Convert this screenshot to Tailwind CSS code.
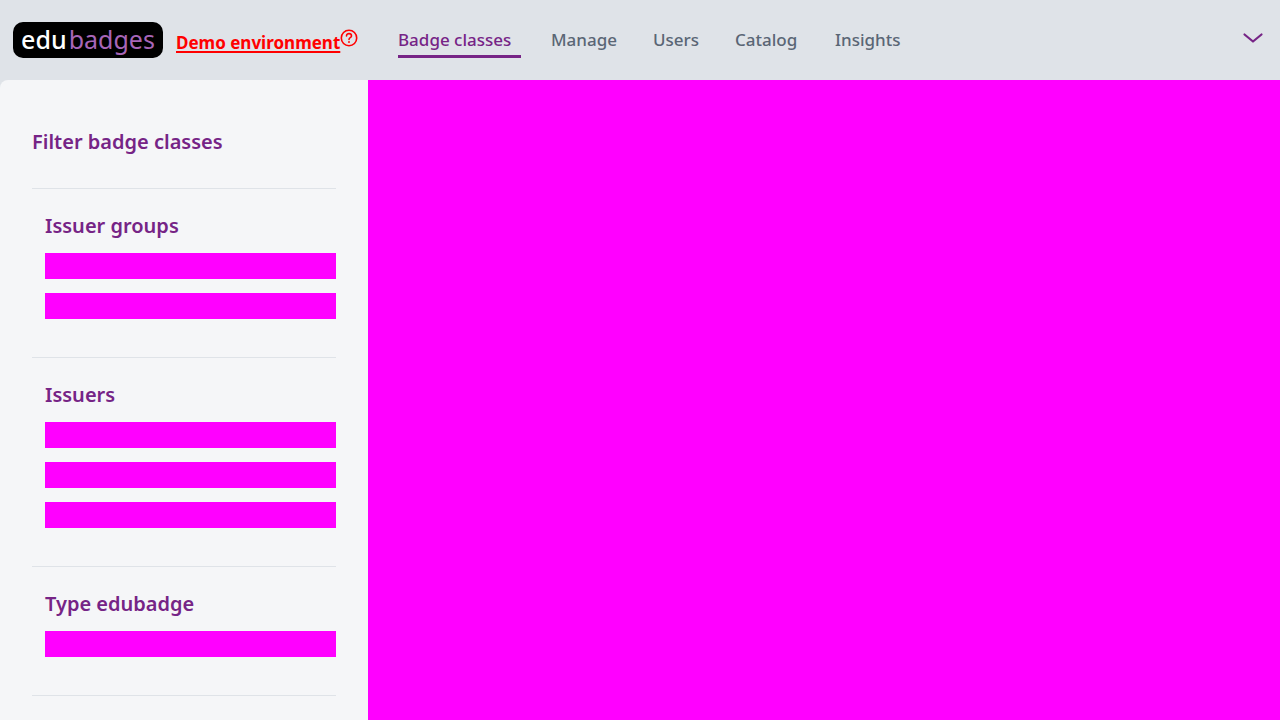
<!DOCTYPE html>
<html lang="en">
<head>
<meta charset="utf-8">
<meta name="viewport" content="width=device-width, initial-scale=1">
<title>edubadges</title>
<script src="https://cdn.jsdelivr.net/npm/@tailwindcss/browser@4"></script>
</head>
<body class="flex h-screen flex-col overflow-hidden bg-[#dfe3e8] font-['Noto_Sans','Open_Sans',sans-serif] text-[#762486]">
<header class="flex h-20 shrink-0 items-center pl-[13px] pr-4">
  <a href="#" class="flex h-9 w-[150px] items-center justify-center gap-0.5 rounded-[10px] bg-black pb-0.5 text-[25px] leading-[34px]"><span class="font-medium text-white">edu</span><span class="text-[#a866b8]">badges</span></a>
  <a href="#" class="ml-[13px] flex w-[185px] text-[#ff0000]"><span class="mt-1.5 text-[17px] leading-7 font-bold whitespace-nowrap underline decoration-2 underline-offset-2">Demo environment</span>
    <svg class="mt-1.5 size-[18px] shrink-0" viewBox="0 0 18 18" fill="none" stroke="currentColor" stroke-width="1.6" stroke-linecap="round" aria-label="Help"><circle cx="9" cy="9" r="7.7"/><path d="M6.500 7c0-3.200 5-3 5-.1C11.500 8.700 9 8.600 9 10.400"/><path d="M9 13v.1" stroke-width="1.900"/></svg>
  </a>
  <nav class="ml-[37px] flex gap-[30px] text-[17px] leading-6 font-medium text-[#5a6675]">
    <a href="#" aria-current="page" class="min-w-[123px] border-b-3 border-[#762486] pt-1.5 pb-[3px] text-[#762486]">Badge classes</a>
    <a href="#" class="min-w-[72px] pt-1.5">Manage</a>
    <a href="#" class="min-w-[52px] pt-1.5">Users</a>
    <a href="#" class="min-w-[70px] pt-1.5">Catalog</a>
    <a href="#" class="pt-1.5">Insights</a>
  </nav>
  <button type="button" aria-label="Open user menu" class="ml-auto pb-1">
    <svg class="h-3 w-[22px]" viewBox="0 0 22 12" fill="none" stroke="currentColor" stroke-width="2.200" stroke-linecap="round" stroke-linejoin="round"><path d="M2.500 2.500 11 9.500l8.500-7"/></svg>
  </button>
</header>
<div class="flex min-h-0 flex-1">
  <aside class="w-[368px] shrink-0 overflow-hidden rounded-tl-lg bg-[#f5f6f8] px-8 pt-12">
    <h2 class="pb-8 text-xl leading-7 font-semibold">Filter badge classes</h2>
    <section class="border-t border-[#dfe3e8] pt-[23px] pb-[38px] pl-[13px]">
      <h3 class="mb-[13px] text-xl leading-7 font-semibold">Issuer groups</h3>
      <div class="flex flex-col gap-[14px]"><div class="h-[26px] bg-[#ff00ff]"></div><div class="h-[26px] bg-[#ff00ff]"></div></div>
    </section>
    <section class="border-t border-[#dfe3e8] pt-[23px] pb-[38px] pl-[13px]">
      <h3 class="mb-[13px] text-xl leading-7 font-semibold">Issuers</h3>
      <div class="flex flex-col gap-[14px]"><div class="h-[26px] bg-[#ff00ff]"></div><div class="h-[26px] bg-[#ff00ff]"></div><div class="h-[26px] bg-[#ff00ff]"></div></div>
    </section>
    <section class="border-y border-[#dfe3e8] pt-[23px] pb-[38px] pl-[13px]">
      <h3 class="mb-[13px] text-xl leading-7 font-semibold">Type edubadge</h3>
      <div class="h-[26px] bg-[#ff00ff]"></div>
    </section>
  </aside>
  <main class="flex-1 bg-[#ff00ff]"></main>
</div>
</body>
</html>
